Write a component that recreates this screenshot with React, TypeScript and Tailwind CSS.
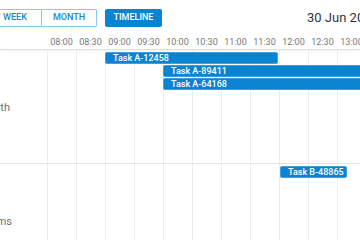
import React from "react";

const times = ["08:00", "08:30", "09:00", "09:30", "10:00", "10:30", "11:00", "11:30", "12:00", "12:30", "13:00"];

function GridRow({ name, pr, events }: { name: string; pr: string; events: { label: string; left: number; top: number; width: number; pl: string }[] }) {
  return (
    <div className="relative flex h-[114px] border-b border-[#e6e6e6]">
      <div className={`flex w-[47px] shrink-0 items-center justify-end overflow-hidden whitespace-nowrap pt-[3px] text-[11px] text-[#707070] ${pr}`}>
        <span>{name}</span>
      </div>
      {times.map((t) => (
        <div key={t} className="w-[29px] shrink-0 border-l border-[#ececec]" />
      ))}
      {events.map((e) => (
        <div
          key={e.label}
          className={`absolute flex h-[12px] items-center whitespace-nowrap rounded-[2px] border border-[#3da0dc] bg-[#0a84d0] text-[9px] font-medium leading-none text-white ${e.pl}`}
          style={{ left: e.left, top: e.top, width: e.width }}
        >
          {e.label}
        </div>
      ))}
    </div>
  );
}

export default function App() {
  return (
    <div className="relative h-[240px] w-[360px] overflow-hidden bg-white" style={{ fontFamily: "Roboto, 'Liberation Sans', sans-serif" }}>
      <div className="flex h-[36px] items-center whitespace-nowrap">
        <div className="ml-[-12px] flex h-[18px] shrink-0">
          <div className="flex w-[54px] shrink-0 items-center justify-center rounded-l-[2px] border border-[#8cc8ea] text-[9px] font-medium text-[#1a86cc]">WEEK</div>
          <div className="flex w-[55px] shrink-0 items-center justify-center rounded-r-[2px] border border-l-0 border-[#8cc8ea] text-[9px] font-medium text-[#1a86cc]">MONTH</div>
        </div>
        <div className="ml-[8px] flex h-[18px] w-[57px] shrink-0 items-center justify-center rounded-[2px] bg-[#0a84d0] text-[9px] font-medium text-white">TIMELINE</div>
        <div className="ml-[145px] shrink-0 text-[13px] text-[#333333]">30 Jun 2024</div>
      </div>
      <div className="flex h-[14px] border-b border-[#e0e0e0] shadow-[0_1px_2px_rgba(0,0,0,0.06)]">
        <div className="w-[47px] shrink-0" />
        {times.map((t) => (
          <div key={t} className="flex w-[29px] shrink-0 items-center justify-center pt-[1px] text-[9px] text-[#777777]">
            {t}
          </div>
        ))}
      </div>
      <GridRow
        name="John Smith"
        pr="pr-[37px]"
        events={[
          { label: "Task A-12458", left: 105, top: 2, width: 173, pl: "pl-[7px]" },
          { label: "Task A-89411", left: 163, top: 15, width: 220, pl: "pl-[7px]" },
          { label: "Task A-64168", left: 163, top: 28, width: 220, pl: "pl-[7px]" },
        ]}
      />
      <GridRow
        name="Mike Williams"
        pr="pr-[35px]"
        events={[{ label: "Task B-48865", left: 280, top: 2, width: 67, pl: "pl-[7px]" }]}
      />
    </div>
  );
}
